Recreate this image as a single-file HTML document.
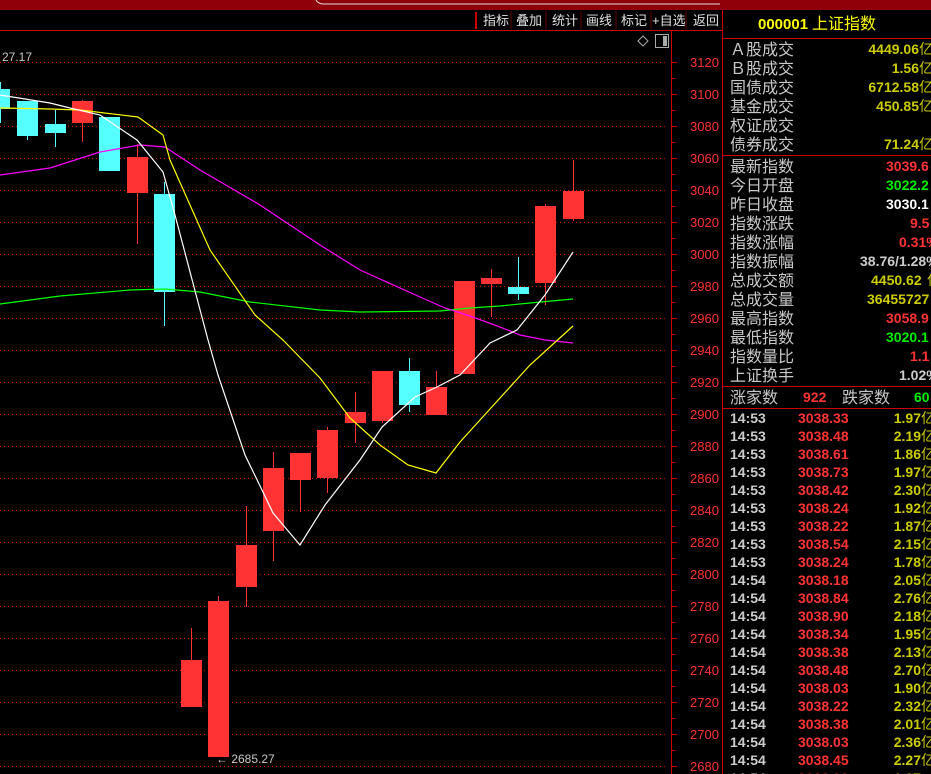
<!DOCTYPE html>
<html><head><meta charset="utf-8"><style>
html,body{margin:0;padding:0;background:#000;width:931px;height:774px;overflow:hidden}
svg{display:block}
text{font-family:"Liberation Sans","Noto Sans CJK SC",sans-serif}
.lb{fill:#c8c8c8;font-size:16px}
.v{font-family:"Liberation Sans",sans-serif;font-weight:bold;font-size:14px}
.ax{fill:#ff3333;font-size:13px}
.tb{fill:#e0e0e0;font-size:13px}
</style></head><body>
<svg width="931" height="774" xmlns="http://www.w3.org/2000/svg">
<rect width="931" height="774" fill="#000"/>
<rect x="0" y="0" width="931" height="10" fill="#8f0008"/>
<path d="M316 0 Q318 4 324 4 L720 4" stroke="#ddd" fill="none" stroke-width="1"/>
<line x1="476" y1="12" x2="476" y2="29" stroke="#c00" stroke-width="2"/>
<g class="tb">
<text x="483" y="25">指标</text><text x="516" y="25">叠加</text><text x="552" y="25">统计</text>
<text x="586" y="25">画线</text><text x="621" y="25">标记</text><text x="652" y="25">+自选</text><text x="693" y="25">返回</text>
</g>
<g stroke="#600" stroke-width="1">
<line x1="511" y1="11" x2="511" y2="29"/><line x1="546" y1="11" x2="546" y2="29"/><line x1="581" y1="11" x2="581" y2="29"/>
<line x1="616" y1="11" x2="616" y2="29"/><line x1="651" y1="11" x2="651" y2="29"/><line x1="686" y1="11" x2="686" y2="29"/>
</g>
<line x1="0" y1="30.5" x2="722" y2="30.5" stroke="#c00"/>
<path d="M643 36 L648 41 L643 46 L638 41 Z" stroke="#aaa" fill="none"/>
<rect x="655.5" y="34.5" width="13" height="13" stroke="#aaa" fill="none"/><rect x="663" y="36" width="4" height="10" fill="#aaa"/>
<text x="2" y="61" fill="#c8c8c8" font-size="12">27.17</text>
<g stroke="#c00" stroke-dasharray="1,3" stroke-width="1">
<line x1="0" y1="62.5" x2="668" y2="62.5"/><line x1="0" y1="94.5" x2="668" y2="94.5"/><line x1="0" y1="126.5" x2="668" y2="126.5"/>
<line x1="0" y1="158.5" x2="668" y2="158.5"/><line x1="0" y1="190.5" x2="668" y2="190.5"/><line x1="0" y1="222.5" x2="668" y2="222.5"/>
<line x1="0" y1="254.5" x2="668" y2="254.5"/><line x1="0" y1="286.5" x2="668" y2="286.5"/><line x1="0" y1="318.5" x2="668" y2="318.5"/>
<line x1="0" y1="350.5" x2="668" y2="350.5"/><line x1="0" y1="382.5" x2="668" y2="382.5"/><line x1="0" y1="414.5" x2="668" y2="414.5"/>
<line x1="0" y1="446.5" x2="668" y2="446.5"/><line x1="0" y1="478.5" x2="668" y2="478.5"/><line x1="0" y1="510.5" x2="668" y2="510.5"/>
<line x1="0" y1="542.5" x2="668" y2="542.5"/><line x1="0" y1="574.5" x2="668" y2="574.5"/><line x1="0" y1="606.5" x2="668" y2="606.5"/>
<line x1="0" y1="638.5" x2="668" y2="638.5"/><line x1="0" y1="670.5" x2="668" y2="670.5"/><line x1="0" y1="702.5" x2="668" y2="702.5"/>
<line x1="0" y1="734.5" x2="668" y2="734.5"/><line x1="0" y1="766.5" x2="668" y2="766.5"/>
</g>
<line x1="671.5" y1="31" x2="671.5" y2="774" stroke="#c00"/>
<g stroke="#c00">
<path d="M672 62.5h5M672 78.5h3M672 94.5h5M672 110.5h3M672 126.5h5M672 142.5h3M672 158.5h5M672 174.5h3M672 190.5h5M672 206.5h3M672 222.5h5M672 238.5h3M672 254.5h5M672 270.5h3M672 286.5h5M672 302.5h3M672 318.5h5M672 334.5h3M672 350.5h5M672 366.5h3M672 382.5h5M672 398.5h3M672 414.5h5M672 430.5h3M672 446.5h5M672 462.5h3M672 478.5h5M672 494.5h3M672 510.5h5M672 526.5h3M672 542.5h5M672 558.5h3M672 574.5h5M672 590.5h3M672 606.5h5M672 622.5h3M672 638.5h5M672 654.5h3M672 670.5h5M672 686.5h3M672 702.5h5M672 718.5h3M672 734.5h5M672 750.5h3M672 766.5h5"/>
</g>
<g class="ax">
<text x="690" y="67">3120</text><text x="690" y="99">3100</text><text x="690" y="131">3080</text><text x="690" y="163">3060</text>
<text x="690" y="195">3040</text><text x="690" y="227">3020</text><text x="690" y="259">3000</text><text x="690" y="291">2980</text>
<text x="690" y="323">2960</text><text x="690" y="355">2940</text><text x="690" y="387">2920</text><text x="690" y="419">2900</text>
<text x="690" y="451">2880</text><text x="690" y="483">2860</text><text x="690" y="515">2840</text><text x="690" y="547">2820</text>
<text x="690" y="579">2800</text><text x="690" y="611">2780</text><text x="690" y="643">2760</text><text x="690" y="675">2740</text>
<text x="690" y="707">2720</text><text x="690" y="739">2700</text><text x="690" y="771">2680</text>
</g>
<g fill="#55ffff" stroke="#55ffff">
<line x1="0.5" y1="82" x2="0.5" y2="123"/><rect x="0" y="89" width="10" height="20" stroke="none"/>
<line x1="27.5" y1="130" x2="27.5" y2="140"/><rect x="17" y="101" width="21" height="35" stroke="none"/>
<line x1="55.5" y1="110" x2="55.5" y2="147"/><rect x="45" y="124" width="21" height="9" stroke="none"/>
<rect x="99" y="117" width="21" height="54" stroke="none"/>
<line x1="164.5" y1="182" x2="164.5" y2="326"/><rect x="154" y="194" width="21" height="98" stroke="none"/>
<line x1="409.5" y1="358" x2="409.5" y2="412"/><rect x="399" y="371" width="21" height="34" stroke="none"/>
<line x1="518.5" y1="257" x2="518.5" y2="300"/><rect x="508" y="287" width="21" height="7" stroke="none"/>
</g>
<g fill="#ff3333" stroke="#ff3333">
<line x1="82.5" y1="100" x2="82.5" y2="142"/><rect x="72" y="101" width="21" height="22" stroke="none"/>
<line x1="137.5" y1="144" x2="137.5" y2="244"/><rect x="127" y="157" width="21" height="36" stroke="none"/>
<line x1="191.5" y1="628" x2="191.5" y2="660"/><rect x="181" y="660" width="21" height="47" stroke="none"/>
<line x1="218.5" y1="596" x2="218.5" y2="601"/><rect x="208" y="601" width="21" height="156" stroke="none"/>
<line x1="246.5" y1="506" x2="246.5" y2="607"/><rect x="236" y="545" width="21" height="42" stroke="none"/>
<line x1="273.5" y1="452" x2="273.5" y2="561"/><rect x="263" y="468" width="21" height="63" stroke="none"/>
<line x1="300.5" y1="453" x2="300.5" y2="512"/><rect x="290" y="453" width="21" height="27" stroke="none"/>
<line x1="327.5" y1="427" x2="327.5" y2="493"/><rect x="317" y="430" width="21" height="48" stroke="none"/>
<line x1="355.5" y1="392" x2="355.5" y2="443"/><rect x="345" y="412" width="21" height="11" stroke="none"/>
<line x1="382.5" y1="371" x2="382.5" y2="423"/><rect x="372" y="371" width="21" height="50" stroke="none"/>
<line x1="436.5" y1="371" x2="436.5" y2="415"/><rect x="426" y="387" width="21" height="28" stroke="none"/>
<rect x="454" y="281" width="21" height="93" stroke="none"/>
<line x1="491.5" y1="269" x2="491.5" y2="317"/><rect x="481" y="278" width="21" height="6" stroke="none"/>
<line x1="545.5" y1="204" x2="545.5" y2="305"/><rect x="535" y="206" width="21" height="77" stroke="none"/>
<line x1="573.5" y1="160" x2="573.5" y2="221"/><rect x="563" y="191" width="21" height="28" stroke="none"/>
</g>
<polyline fill="none" stroke="#00ff00" stroke-width="1.2" points="0,304 60,296 130,290 165,289 200,292 250,302 320,310 360,312 440,311 470,308 500,306 530,303 573,299"/>
<polyline fill="none" stroke="#ff00ff" stroke-width="1.2" points="0,175 50,168 100,152 140,145 165,147 200,170 260,205 320,245 360,270 420,297 445,308 470,316 500,327 520,335 545,340 573,343"/>
<polyline fill="none" stroke="#ffff00" stroke-width="1.2" points="0,108 50,109 80,110 138,117 163,135 170,160 210,250 255,315 283,340 320,378 350,418 380,445 408,465 436,473 460,442 480,420 530,365 573,326"/>
<polyline fill="none" stroke="#ffffff" stroke-width="1.2" points="0,95 50,103 70,108 100,115 137,140 163,172 175,215 208,340 218,375 245,455 262,490 273,513 300,545 325,505 360,460 382,427 415,397 437,387 460,375 490,343 517,330 545,295 573,252"/>
<text x="216" y="763" fill="#c8c8c8" font-size="12">← 2685.27</text>
<line x1="722.5" y1="10" x2="722.5" y2="774" stroke="#c00"/>
<text x="758" y="29" fill="#ffff00" font-size="15" font-weight="bold" font-family="Liberation Sans,sans-serif">000001</text>
<text x="812" y="29" fill="#ffff00" font-size="16">上证指数</text>
<line x1="723" y1="38.5" x2="931" y2="38.5" stroke="#c00"/>
<g class="lb">
<text x="730" y="55">Ａ股成交</text><text x="730" y="74">Ｂ股成交</text><text x="730" y="93">国债成交</text>
<text x="730" y="112">基金成交</text><text x="730" y="131">权证成交</text><text x="730" y="150">债券成交</text>
</g>
<g class="v" fill="#cccc00" text-anchor="end">
<text x="919" y="54">4449.06</text><text x="919" y="73">1.56</text><text x="919" y="92">6712.58</text>
<text x="919" y="111">450.85</text><text x="919" y="149">71.24</text>
</g>
<g fill="#cccc00" font-size="14"><text x="919" y="54">亿</text><text x="919" y="73">亿</text><text x="919" y="92">亿</text><text x="919" y="111">亿</text><text x="919" y="149">亿</text></g>
<line x1="723" y1="155.5" x2="931" y2="155.5" stroke="#c00"/>
<g class="lb">
<text x="730" y="172">最新指数</text><text x="730" y="191">今日开盘</text><text x="730" y="210">昨日收盘</text>
<text x="730" y="229">指数涨跌</text><text x="730" y="248">指数涨幅</text><text x="730" y="267">指数振幅</text>
<text x="730" y="286">总成交额</text><text x="730" y="305">总成交量</text><text x="730" y="324">最高指数</text>
<text x="730" y="343">最低指数</text><text x="730" y="362">指数量比</text><text x="730" y="381">上证换手</text>
</g>
<g class="v">
<text x="886" y="171" fill="#ff3333">3039.6</text>
<text x="886" y="190" fill="#00ee00">3022.2</text>
<text x="886" y="209" fill="#ffffff">3030.1</text>
<text x="910" y="228" fill="#ff3333">9.5</text>
<text x="899" y="247" fill="#ff3333">0.31%</text>
<text x="860" y="266" fill="#cccccc">38.76/1.28%</text>
<text x="871" y="285" fill="#cccc00">4450.62</text><text x="927" y="285" fill="#cccc00" font-weight="normal" font-size="14">亿</text>
<text x="867" y="304" fill="#cccc00">36455727</text>
<text x="886" y="323" fill="#ff3333">3058.9</text>
<text x="886" y="342" fill="#00ee00">3020.1</text>
<text x="910" y="361" fill="#ff3333">1.1</text>
<text x="899" y="380" fill="#cccccc">1.02%</text>
</g>
<line x1="723" y1="386.5" x2="931" y2="386.5" stroke="#c00"/>
<text x="730" y="403" class="lb">涨家数</text>
<text x="803" y="402" class="v" fill="#ff3333">922</text>
<text x="842" y="403" class="lb">跌家数</text>
<text x="914" y="402" class="v" fill="#00ee00">60</text>
<line x1="723" y1="408.5" x2="931" y2="408.5" stroke="#c00"/>
<g class="v" fill="#cccccc">
<text x="730" y="423">14:53</text><text x="730" y="441">14:53</text><text x="730" y="459">14:53</text><text x="730" y="477">14:53</text>
<text x="730" y="495">14:53</text><text x="730" y="513">14:53</text><text x="730" y="531">14:53</text><text x="730" y="549">14:53</text>
<text x="730" y="567">14:53</text><text x="730" y="585">14:54</text><text x="730" y="603">14:54</text><text x="730" y="621">14:54</text>
<text x="730" y="639">14:54</text><text x="730" y="657">14:54</text><text x="730" y="675">14:54</text><text x="730" y="693">14:54</text>
<text x="730" y="711">14:54</text><text x="730" y="729">14:54</text><text x="730" y="747">14:54</text><text x="730" y="765">14:54</text>
<text x="730" y="783">14:54</text>
</g>
<g class="v" fill="#ff3333">
<text x="798" y="423">3038.33</text><text x="798" y="441">3038.48</text><text x="798" y="459">3038.61</text><text x="798" y="477">3038.73</text>
<text x="798" y="495">3038.42</text><text x="798" y="513">3038.24</text><text x="798" y="531">3038.22</text><text x="798" y="549">3038.54</text>
<text x="798" y="567">3038.24</text><text x="798" y="585">3038.18</text><text x="798" y="603">3038.84</text><text x="798" y="621">3038.90</text>
<text x="798" y="639">3038.34</text><text x="798" y="657">3038.38</text><text x="798" y="675">3038.48</text><text x="798" y="693">3038.03</text>
<text x="798" y="711">3038.22</text><text x="798" y="729">3038.38</text><text x="798" y="747">3038.03</text><text x="798" y="765">3038.45</text>
<text x="798" y="783">3038.38</text>
</g>
<g class="v" fill="#cccc00" text-anchor="end">
<text x="921" y="423">1.97</text><text x="921" y="441">2.19</text><text x="921" y="459">1.86</text><text x="921" y="477">1.97</text>
<text x="921" y="495">2.30</text><text x="921" y="513">1.92</text><text x="921" y="531">1.87</text><text x="921" y="549">2.15</text>
<text x="921" y="567">1.78</text><text x="921" y="585">2.05</text><text x="921" y="603">2.76</text><text x="921" y="621">2.18</text>
<text x="921" y="639">1.95</text><text x="921" y="657">2.13</text><text x="921" y="675">2.70</text><text x="921" y="693">1.90</text>
<text x="921" y="711">2.32</text><text x="921" y="729">2.01</text><text x="921" y="747">2.36</text><text x="921" y="765">2.27</text>
<text x="921" y="783">1.97</text>
</g>
<g fill="#cccc00" font-size="14">
<text x="921" y="423">亿</text><text x="921" y="441">亿</text><text x="921" y="459">亿</text><text x="921" y="477">亿</text>
<text x="921" y="495">亿</text><text x="921" y="513">亿</text><text x="921" y="531">亿</text><text x="921" y="549">亿</text>
<text x="921" y="567">亿</text><text x="921" y="585">亿</text><text x="921" y="603">亿</text><text x="921" y="621">亿</text>
<text x="921" y="639">亿</text><text x="921" y="657">亿</text><text x="921" y="675">亿</text><text x="921" y="693">亿</text>
<text x="921" y="711">亿</text><text x="921" y="729">亿</text><text x="921" y="747">亿</text><text x="921" y="765">亿</text>
</g>
</svg>
</body></html>
